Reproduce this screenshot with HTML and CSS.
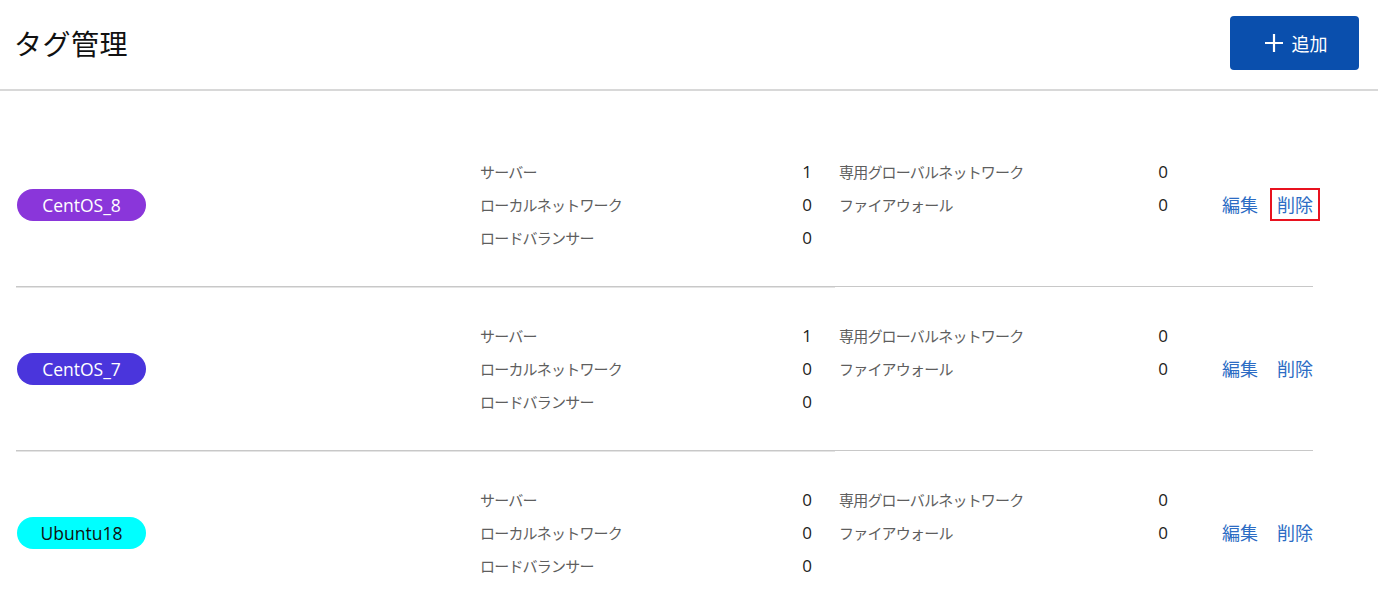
FILE: index.html
```html
<!DOCTYPE html>
<html lang="ja">
<head>
<meta charset="utf-8">
<title>タグ管理</title>
<link rel="stylesheet" href="styles.css">
</head>
<body>
<header class="page-header">
  <h1 class="page-title">タグ管理</h1>
  <button class="add-btn" type="button">
    <svg class="plus" width="20" height="20" viewBox="0 0 20 20"><path d="M10 1v18M1 10h18" stroke="#fff" stroke-width="2.2" fill="none"/></svg>
    <span>追加</span>
  </button>
</header>

<main class="tag-list">
  <section class="tag-row first">
    <div class="tag-cell"><span class="badge purple">CentOS_8</span></div>
    <dl class="stats">
      <dt>サーバー</dt><dd>1</dd>
      <dt>ローカルネットワーク</dt><dd>0</dd>
      <dt>ロードバランサー</dt><dd>0</dd>
    </dl>
    <dl class="stats">
      <dt>専用グローバルネットワーク</dt><dd>0</dd>
      <dt>ファイアウォール</dt><dd>0</dd>
    </dl>
    <div class="actions"><a class="link">編集</a><a class="link del focused">削除</a></div>
  </section>

  <section class="tag-row">
    <div class="tag-cell"><span class="badge indigo">CentOS_7</span></div>
    <dl class="stats">
      <dt>サーバー</dt><dd>1</dd>
      <dt>ローカルネットワーク</dt><dd>0</dd>
      <dt>ロードバランサー</dt><dd>0</dd>
    </dl>
    <dl class="stats">
      <dt>専用グローバルネットワーク</dt><dd>0</dd>
      <dt>ファイアウォール</dt><dd>0</dd>
    </dl>
    <div class="actions"><a class="link">編集</a><a class="link del">削除</a></div>
  </section>

  <section class="tag-row">
    <div class="tag-cell"><span class="badge cyan">Ubuntu18</span></div>
    <dl class="stats">
      <dt>サーバー</dt><dd>0</dd>
      <dt>ローカルネットワーク</dt><dd>0</dd>
      <dt>ロードバランサー</dt><dd>0</dd>
    </dl>
    <dl class="stats">
      <dt>専用グローバルネットワーク</dt><dd>0</dd>
      <dt>ファイアウォール</dt><dd>0</dd>
    </dl>
    <div class="actions"><a class="link">編集</a><a class="link del">削除</a></div>
  </section>
</main>
</body>
</html>
```

FILE: styles.css
```css
* { box-sizing: border-box; }

body {
  margin: 0;
  background: #fff;
  font-family: "Noto Sans CJK JP", "Noto Sans", sans-serif;
  color: #222;
}

.page-header {
  height: 91px;
  display: flex;
  align-items: center;
  justify-content: space-between;
  padding: 0 19px 4px 14px;
  border-bottom: 2px solid #d8d8d8;
}

.page-title {
  margin: 0;
  font-size: 28px;
  font-weight: 400;
  letter-spacing: 0.5px;
  color: #111;
}

.add-btn {
  width: 129px;
  height: 54px;
  border: none;
  border-radius: 4px;
  background: #0a4fad;
  color: #fff;
  font-family: inherit;
  font-size: 18px;
  display: flex;
  align-items: center;
  justify-content: center;
  gap: 8px;
  padding: 0 0 0 2px;
}

.tag-list {
  padding-top: 32px;
}

.tag-row {
  width: 1297px;
  margin-left: 16px;
  display: grid;
  grid-template-columns: 464px 332px 356px auto;
  align-items: start;
  padding: 32px 0;
  border-top: 1px solid #c8c8c8;
  position: relative;
}

.tag-row::before {
  content: "";
  position: absolute;
  left: 0;
  top: 0;
  width: 819px;
  height: 1px;
  background: #e4e4e4;
}

.tag-row.first {
  border-top: none;
}
.tag-row.first::before { display: none; }

.tag-cell {
  height: 99px;
  display: flex;
  align-items: center;
  padding-left: 1px;
}

.badge {
  display: inline-flex;
  align-items: center;
  justify-content: center;
  width: 129px;
  height: 32px;
  border-radius: 16px;
  font-family: "Open Sans", "Noto Sans", sans-serif;
  font-size: 17.5px;
  color: #fff;
}
.badge.purple { background: #8a36da; }
.badge.indigo { background: #4a35dc; }
.badge.cyan { background: #00ffff; color: #111; }

.stats {
  margin: 0;
  display: grid;
  grid-template-columns: 1fr auto;
  line-height: 33px;
}
.stats + .stats { margin-left: 27px; }

.stats dt {
  font-size: 15px;
  letter-spacing: -0.8px;
  color: #5e5e5e;
}
.stats dd {
  margin: 0;
  text-align: right;
  font-family: "Open Sans", "Noto Sans", sans-serif;
  font-size: 17px;
  color: #222;
}

.actions {
  height: 99px;
  display: flex;
  align-items: center;
  justify-content: flex-end;
  gap: 12px;
  margin-right: -7px;
}

.link {
  font-size: 18px;
  color: #2c6cc4;
  line-height: 29px;
  cursor: pointer;
}
.link.del {
  border: 2px solid transparent;
  padding: 0 5px;
}
.link.del.focused {
  border-color: #e8121f;
}
```
